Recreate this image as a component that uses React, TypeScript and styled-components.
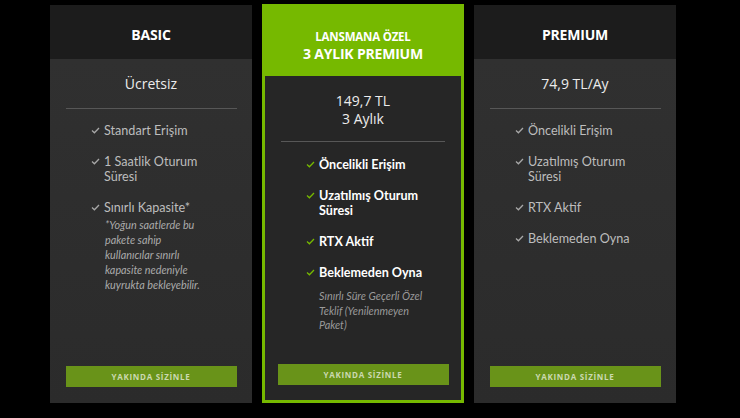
import React from "react";
import styled, { createGlobalStyle } from "styled-components";

const Global = createGlobalStyle`
  html, body { margin: 0; padding: 0; background: #000; }
  body { width: 740px; height: 418px; overflow: hidden; font-family: "Lato", "Open Sans", sans-serif; }
`;

const Page = styled.div`
  display: flex;
  align-items: flex-start;
  gap: 10px;
  padding: 4px 0 0 50px;
  height: 418px;
  box-sizing: border-box;
  background: #000;
`;

const Card = styled.div<{ $featured?: boolean }>`
  width: 202px;
  box-sizing: border-box;
  display: flex;
  flex-direction: column;
  margin-top: ${(p) => (p.$featured ? "0" : "1px")};
  height: ${(p) => (p.$featured ? "399px" : "398px")};
  background: ${(p) => (p.$featured ? "#76b900" : "#2c2c2c")};
  padding: ${(p) => (p.$featured ? "0 3px 3px" : "0")};
`;

const Header = styled.div<{ $featured?: boolean }>`
  height: ${(p) => (p.$featured ? "72px" : "54px")};
  flex: none;
  display: flex;
  flex-direction: column;
  align-items: center;
  justify-content: center;
  padding-top: ${(p) => (p.$featured ? "10px" : "4px")};
  box-sizing: border-box;
  background: ${(p) => (p.$featured ? "#76b900" : "#1c1c1c")};
  color: #fff;
  font-family: "Open Sans", sans-serif;
  font-weight: 700;
`;

const Title = styled.div<{ $size: number }>`
  font-size: ${(p) => p.$size}px;
  line-height: 17px;
  letter-spacing: -0.2px;
`;

const Body = styled.div<{ $featured?: boolean }>`
  flex: 1;
  display: flex;
  flex-direction: column;
  background: ${(p) =>
    p.$featured ? "#262626" : "linear-gradient(180deg, #303030 0%, #2b2b2b 100%)"};
  padding: 16px 0 ${(p) => (p.$featured ? "15px" : "16px")};
`;

const Price = styled.div<{ $lh: number }>`
  text-align: center;
  color: #ececec;
  font-family: "Open Sans", sans-serif;
  font-size: 14px;
  line-height: ${(p) => p.$lh}px;
`;

const Divider = styled.div<{ $featured?: boolean }>`
  height: 1px;
  background: #575757;
  margin: ${(p) => (p.$featured ? "14px 16px 15px" : "15px 15px 14px 16px")};
`;

const Features = styled.ul`
  list-style: none;
  margin: 0;
  padding: 0 6px 0 41px;
  display: flex;
  flex-direction: column;
  gap: 16px;
`;

const Feature = styled.li<{ $featured?: boolean }>`
  display: flex;
  gap: 4px;
  color: ${(p) => (p.$featured ? "#ffffff" : "#bdbdbd")};
  font-size: 12.6px;
  font-weight: ${(p) => (p.$featured ? 700 : 400)};
  line-height: 15px;
`;

const CheckBox = styled.span`
  flex: none;
  width: 9px;
  height: 15px;
  display: flex;
  align-items: center;
`;

const FeatureText = styled.div`
  display: flex;
  flex-direction: column;
  white-space: nowrap;
`;

const Note = styled.div<{ $featured?: boolean }>`
  font-style: italic;
  font-weight: 400;
  font-size: 10.8px;
  line-height: ${(p) => (p.$featured ? "14.5px" : "15px")};
  color: ${(p) => (p.$featured ? "#9a9a9a" : "#ababab")};
  margin: ${(p) => (p.$featured ? "9px 0 0 54px" : "2px 0 0 1px")};
  white-space: nowrap;
`;

const Spacer = styled.div`
  flex: 1;
`;

const Button = styled.button`
  align-self: center;
  width: 171px;
  height: 21px;
  margin: 0;
  border: none;
  background: #699319;
  color: #cbd9b0;
  font-family: "Open Sans", sans-serif;
  font-weight: 700;
  font-size: 8px;
  letter-spacing: 0.7px;
  cursor: pointer;
  padding: 0;
`;

const Check = ({ color }: { color: string }) => (
  <svg width="9" height="7" viewBox="0 0 9 7">
    <path d="M1 3.6 L3.4 5.8 L8 1" fill="none" stroke={color} strokeWidth="1.3" />
  </svg>
);

type Item = { text: React.ReactNode; note?: React.ReactNode };

const List = ({ items, featured }: { items: Item[]; featured?: boolean }) => (
  <Features>
    {items.map((it, i) => (
      <Feature key={i} $featured={featured}>
        <CheckBox>
          <Check color={featured ? "#76b900" : "#a8a8a8"} />
        </CheckBox>
        <FeatureText>
          <div>{it.text}</div>
          {it.note && <Note>{it.note}</Note>}
        </FeatureText>
      </Feature>
    ))}
  </Features>
);

export default function App() {
  return (
    <>
      <Global />
      <Page>
        <Card>
          <Header>
            <Title $size={14}>BASIC</Title>
          </Header>
          <Body>
            <Price $lh={18}>Ücretsiz</Price>
            <Divider />
            <List
              items={[
                { text: "Standart Erişim" },
                { text: <>1 Saatlik Oturum<br />Süresi</> },
                {
                  text: "Sınırlı Kapasite*",
                  note: (
                    <>
                      *Yoğun saatlerde bu<br />pakete sahip<br />kullanıcılar sınırlı<br />kapasite nedeniyle<br />kuyrukta bekleyebilir.
                    </>
                  ),
                },
              ]}
            />
            <Spacer />
            <Button>YAKINDA SİZİNLE</Button>
          </Body>
        </Card>

        <Card $featured>
          <Header $featured>
            <Title $size={11.5}>LANSMANA ÖZEL</Title>
            <Title $size={14}>3 AYLIK PREMIUM</Title>
          </Header>
          <Body $featured>
            <Price $lh={17.5}>
              149,7 TL
              <br />3 Aylık
            </Price>
            <Divider $featured />
            <List
              featured
              items={[
                { text: "Öncelikli Erişim" },
                { text: <>Uzatılmış Oturum<br />Süresi</> },
                { text: "RTX Aktif" },
                { text: "Beklemeden Oyna" },
              ]}
            />
            <Note $featured>
              Sınırlı Süre Geçerli Özel<br />Teklif (Yenilenmeyen<br />Paket)
            </Note>
            <Spacer />
            <Button>YAKINDA SİZİNLE</Button>
          </Body>
        </Card>

        <Card>
          <Header>
            <Title $size={14}>PREMIUM</Title>
          </Header>
          <Body>
            <Price $lh={18}>74,9 TL/Ay</Price>
            <Divider />
            <List
              items={[
                { text: "Öncelikli Erişim" },
                { text: <>Uzatılmış Oturum<br />Süresi</> },
                { text: "RTX Aktif" },
                { text: "Beklemeden Oyna" },
              ]}
            />
            <Spacer />
            <Button>YAKINDA SİZİNLE</Button>
          </Body>
        </Card>
      </Page>
    </>
  );
}
